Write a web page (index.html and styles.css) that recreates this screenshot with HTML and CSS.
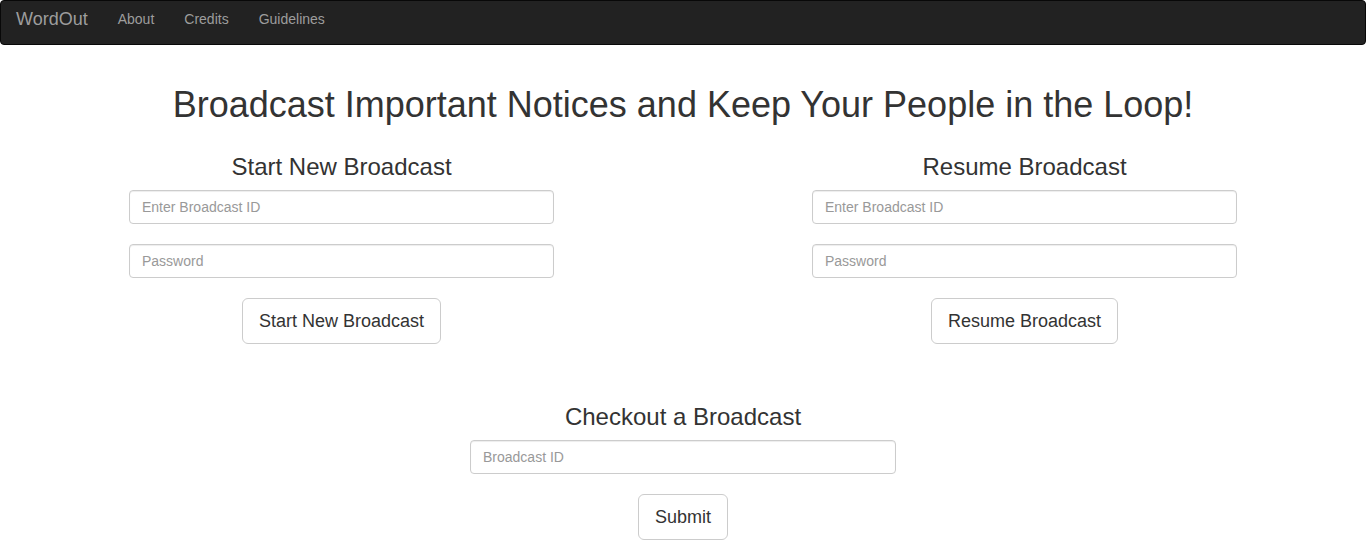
FILE: index.html
```html
<!DOCTYPE html>
<html>
<head>
<meta charset="utf-8">
<title>WordOut</title>
<link rel="stylesheet" href="styles.css">
</head>
<body>
<nav class="navbar">
  <a class="brand" href="#">WordOut</a>
  <a class="nav-link" href="#">About</a>
  <a class="nav-link" href="#">Credits</a>
  <a class="nav-link" href="#">Guidelines</a>
</nav>
<main class="page">
  <h1 class="title">Broadcast Important Notices and Keep Your People in the Loop!</h1>
  <div class="row">
    <section class="panel">
      <h3 class="panel-title">Start New Broadcast</h3>
      <input class="field" type="text" placeholder="Enter Broadcast ID">
      <input class="field" type="password" placeholder="Password">
      <button class="btn">Start New Broadcast</button>
    </section>
    <section class="panel">
      <h3 class="panel-title">Resume Broadcast</h3>
      <input class="field" type="text" placeholder="Enter Broadcast ID">
      <input class="field" type="password" placeholder="Password">
      <button class="btn">Resume Broadcast</button>
    </section>
  </div>
  <section class="panel checkout">
    <h3 class="panel-title">Checkout a Broadcast</h3>
    <input class="field" type="text" placeholder="Broadcast ID">
    <button class="btn">Submit</button>
  </section>
</main>
</body>
</html>
```
FILE: styles.css
```css
* { box-sizing: border-box; }
body {
  margin: 0;
  font-family: "Liberation Sans", Arial, Helvetica, sans-serif;
  font-size: 14px;
  color: #333;
  background: #fff;
}
.navbar {
  display: flex;
  align-items: center;
  height: 45px;
  background: #222;
  border: 1px solid #080808;
  border-radius: 4px;
  padding-bottom: 8px;
  margin-bottom: 20px;
}
.navbar a { text-decoration: none; color: #9d9d9d; }
.brand {
  font-size: 18px;
  line-height: 20px;
  padding: 0 15px;
}
.nav-link {
  font-size: 14px;
  line-height: 20px;
  padding: 0 15px;
}
.page { display: flex; flex-direction: column; align-items: center; }
.title {
  font-size: 36px;
  font-weight: 500;
  line-height: 1.1;
  margin: 20px 0 10px;
  text-align: center;
}
.row { display: flex; width: 100%; }
.panel {
  flex: 1;
  display: flex;
  flex-direction: column;
  align-items: center;
  gap: 20px;
}
.panel-title {
  font-size: 24px;
  font-weight: 500;
  line-height: 1.1;
  margin: 19px 0 -10px;
}
.field {
  width: 425px;
  height: 34px;
  padding: 6px 12px;
  font-family: inherit;
  font-size: 14px;
  color: #555;
  border: 1px solid #ccc;
  border-radius: 4px;
  box-shadow: inset 0 1px 1px rgba(0,0,0,.075);
  outline: none;
}
.field::placeholder { color: #999; }
.btn {
  font-family: inherit;
  font-size: 18px;
  line-height: 24px;
  padding: 10px 16px;
  color: #333;
  background: #fff;
  border: 1px solid #ccc;
  border-radius: 6px;
}
.checkout { margin-top: 41px; width: 100%; }
.checkout .field { width: 426px; }
```
